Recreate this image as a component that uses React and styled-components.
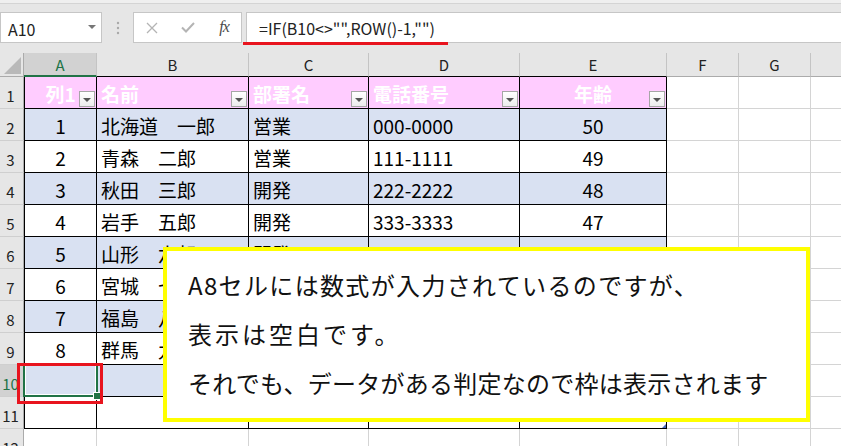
import React from "react";
import styled, { createGlobalStyle, css } from "styled-components";

const GlobalStyle = createGlobalStyle`
  html, body {
    margin: 0;
    padding: 0;
    background: #fff;
  }
  body {
    font-family: "Noto Sans CJK JP", "Noto Sans", sans-serif;
  }
`;

const GREEN = "#217346";

const headers = [
  { text: "列1", align: "center" },
  { text: "名前" },
  { text: "部署名" },
  { text: "電話番号" },
  { text: "年齢", align: "center" },
];

const ALIGN = ["center", "left", "left", "left", "center"];

const rows = [
  [1, "北海道　一郎", "営業", "000-0000", 50],
  [2, "青森　二郎", "営業", "111-1111", 49],
  [3, "秋田　三郎", "開発", "222-2222", 48],
  [4, "岩手　五郎", "開発", "333-3333", 47],
  [5, "山形　六郎", "開発", "444-4444", 46],
  [6, "宮城　七郎", "営業", "555-5555", 45],
  [7, "福島　八郎", "開発", "666-6666", 44],
  [8, "群馬　九郎", "営業", "777-7777", 43],
  ["", "", "", "", ""],
  ["", "", "", "", ""],
  ["", "", "", "", ""],
];

// H is only partly in view, its letter falls outside the window
const COLUMNS = ["A", "B", "C", "D", "E", "F", "G", ""];

const notes = [
  { text: "A8セルには数式が入力されているのですが、", spacing: 1.35 },
  { text: "表示は空白です。", spacing: 3 },
  { text: "それでも、データがある判定なので枠は表示されます", spacing: 0.25 },
];

const App = () => {
  return (
    <Window>
      <GlobalStyle />
      <FormulaBar>
        <NameBox>
          A10
          <Caret />
        </NameBox>
        <Grip>
          <svg width="4" height="14" viewBox="0 0 4 14">
            <circle cx="2" cy="2" r="1.2" fill="#a8a8a8" />
            <circle cx="2" cy="7" r="1.2" fill="#a8a8a8" />
            <circle cx="2" cy="12" r="1.2" fill="#a8a8a8" />
          </svg>
        </Grip>
        <FxBox>
          <FxButton>
            <svg width="12" height="12" viewBox="0 0 12 12">
              <path d="M1 1 L11 11 M11 1 L1 11" stroke="#b4b4b4" strokeWidth="1.3" />
            </svg>
          </FxButton>
          <FxButton>
            <svg width="14" height="11" viewBox="0 0 14 11">
              <path d="M1 5.5 L5 9.5 L13 1" stroke="#b4b4b4" strokeWidth="2" fill="none" />
            </svg>
          </FxButton>
          <FxButton>
            <FxLabel>fx</FxLabel>
          </FxButton>
        </FxBox>
        <FormulaInput>
          =IF(B10&lt;&gt;"",ROW()-1,"")
          <RedUnderline />
        </FormulaInput>
      </FormulaBar>

      <Sheet>
        <Corner>
          <svg width="24" height="24" viewBox="0 0 24 24">
            <polygon points="21,4 21,21 4,21" fill="#b9b9b9" />
          </svg>
        </Corner>
        {COLUMNS.map((c, i) => (
          <ColHeader key={i} $active={i === 0} $edge={i > 0 && i < 5}>
            {c}
          </ColHeader>
        ))}

        <RowHeader>1</RowHeader>
        {COLUMNS.map((c, i) =>
          i < 5 ? (
            <Cell key={i} $table $head $first={i === 0} $align={headers[i].align}>
              {headers[i].text}
              <FilterButton />
            </Cell>
          ) : (
            <Cell key={i} />
          )
        )}

        {rows.map((row, ri) => {
          const r = ri + 2;
          const inTable = r <= 11;
          return (
            <React.Fragment key={r}>
              <RowHeader $active={r === 10}>{r}</RowHeader>
              {COLUMNS.map((c, i) => {
                const table = inTable && i < 5;
                return (
                  <Cell
                    key={i}
                    $table={table}
                    $first={table && i === 0}
                    $band={table && r % 2 === 0}
                    $align={ALIGN[i]}
                    $resize={r === 11 && i === 4}
                  >
                    {i < 5 ? row[i] : ""}
                    {r === 10 && i === 0 && (
                      <Selection>
                        <FillHandle />
                      </Selection>
                    )}
                  </Cell>
                );
              })}
            </React.Fragment>
          );
        })}

        <RedMark />
        <Callout>
          {notes.map((n) => (
            <NoteLine key={n.text} $spacing={n.spacing}>
              {n.text}
            </NoteLine>
          ))}
        </Callout>
      </Sheet>
    </Window>
  );
};

const Window = styled.div`
  width: 841px;
  height: 446px;
  overflow: hidden;
  background: #fff;
`;

const FormulaBar = styled.div`
  height: 53px;
  box-sizing: border-box;
  background: #e6e6e6;
  border-top: 3px solid #efefef;
  box-shadow: inset 0 1px 0 #d4d4d4;
  padding-top: 9px;
  display: flex;
  align-items: flex-start;
`;

const NameBox = styled.div`
  width: 102px;
  height: 31px;
  box-sizing: border-box;
  background: #fff;
  border: 1px solid #c6c6c6;
  display: flex;
  align-items: center;
  justify-content: space-between;
  padding: 2px 5px 0 7px;
  font-size: 16px;
  color: #222;
`;

const Caret = styled.span`
  width: 0;
  height: 0;
  border-left: 4px solid transparent;
  border-right: 4px solid transparent;
  border-top: 4px solid #767676;
  margin-top: -4px;
`;

const Grip = styled.div`
  width: 31px;
  height: 31px;
  display: flex;
  align-items: center;
  justify-content: center;
`;

const FxBox = styled.div`
  width: 109px;
  height: 31px;
  box-sizing: border-box;
  background: #fff;
  border: 1px solid #c6c6c6;
  display: grid;
  grid-template-columns: repeat(3, 36px);
  align-items: center;
`;

const FxButton = styled.div`
  display: flex;
  align-items: center;
  justify-content: center;
  height: 100%;
`;

const FxLabel = styled.span`
  font-family: "Liberation Serif", "DejaVu Serif", serif;
  font-style: italic;
  font-size: 16px;
  color: #4a4a4a;
  letter-spacing: -1px;
  margin-top: -2px;
`;

const FormulaInput = styled.div`
  position: relative;
  flex: 1;
  margin-left: 4px;
  height: 31px;
  box-sizing: border-box;
  background: #fff;
  border: 1px solid #c6c6c6;
  border-right: none;
  padding-left: 12px;
  display: flex;
  align-items: center;
  font-size: 16px;
  color: #222;
  white-space: nowrap;
`;

const RedUnderline = styled.span`
  position: absolute;
  left: -4px;
  bottom: -3px;
  width: 205px;
  height: 3px;
  background: #e8141e;
`;

const Sheet = styled.div`
  position: relative;
  display: grid;
  width: max-content;
  grid-template-columns: 24px 73px 152px 120px 151px 147px 72px 72px 72px;
  grid-template-rows: 24px;
  grid-auto-rows: 32px;
`;

const Corner = styled.div`
  background: #e6e6e6;
  box-sizing: border-box;
  border-right: 1px solid #ababab;
  border-bottom: 1px solid #ababab;
  svg {
    display: block;
  }
`;

const ColHeader = styled.div`
  box-sizing: border-box;
  display: flex;
  align-items: center;
  justify-content: center;
  font-size: 15px;
  background: ${(p) => (p.$active ? "#d2d2d2" : "#e6e6e6")};
  color: ${(p) => (p.$active ? GREEN : "#222")};
  border-right: 1px solid #c4c4c4;
  border-bottom: ${(p) =>
    p.$active ? `2px solid ${GREEN}` : p.$edge ? "1px solid #000" : "1px solid #ababab"};
`;

const RowHeader = styled.div`
  box-sizing: border-box;
  display: flex;
  align-items: center;
  justify-content: center;
  padding: 6px 2px 0 0;
  font-size: 15px;
  background: ${(p) => (p.$active ? "#d2d2d2" : "#e6e6e6")};
  color: ${(p) => (p.$active ? GREEN : "#222")};
  border-right: 1px solid #ababab;
  border-bottom: 1px solid #cfcfcf;
`;

const Cell = styled.div`
  position: relative;
  box-sizing: border-box;
  display: flex;
  align-items: center;
  justify-content: ${(p) => (p.$align === "center" ? "center" : "flex-start")};
  padding: 2px 4px 0;
  font-size: 19px;
  color: #000;
  white-space: nowrap;
  background: ${(p) => (p.$head ? "#ffccff" : p.$band ? "#d9e1f2" : "#fff")};
  border-right: 1px solid ${(p) => (p.$table ? "#000" : "#d4d4d4")};
  border-bottom: 1px solid ${(p) => (p.$table ? "#000" : "#d4d4d4")};

  ${(p) =>
    p.$first &&
    css`
      border-left: 1px solid #000;
    `}

  ${(p) =>
    p.$head &&
    css`
      color: #fff;
      font-weight: 700;
    `}

  ${(p) =>
    p.$resize &&
    css`
      &::after {
        content: "";
        position: absolute;
        right: 0;
        bottom: 0;
        width: 0;
        height: 0;
        border-style: solid;
        border-width: 0 0 4px 4px;
        border-color: transparent transparent #4a6bbd transparent;
      }
    `}
`;

const FilterButton = styled.span`
  position: absolute;
  right: 1px;
  bottom: 1px;
  width: 16px;
  height: 16px;
  box-sizing: border-box;
  border: 1px solid #a6a6a6;
  background: linear-gradient(#ffffff, #ececec);

  &::after {
    content: "";
    position: absolute;
    left: 3px;
    top: 6px;
    border-left: 4px solid transparent;
    border-right: 4px solid transparent;
    border-top: 4px solid #555;
  }
`;

const Selection = styled.span`
  position: absolute;
  left: -2px;
  top: -2px;
  right: -2px;
  bottom: -1px;
  border: 2px solid ${GREEN};
  box-shadow: inset 0 0 0 1px #fff;
  z-index: 2;
`;

const FillHandle = styled.span`
  position: absolute;
  right: -5px;
  bottom: -5px;
  width: 6px;
  height: 6px;
  background: ${GREEN};
  border: 1px solid #fff;
`;

const RedMark = styled.div`
  position: absolute;
  left: 17px;
  top: 310px;
  width: 86px;
  height: 41px;
  box-sizing: border-box;
  border: 3px solid #e8141e;
  z-index: 3;
`;

const Callout = styled.div`
  position: absolute;
  left: 163px;
  top: 194px;
  width: 647px;
  height: 175px;
  box-sizing: border-box;
  border: 4px solid #ffff00;
  background: #fff;
  padding: 9px 0 0 21px;
  font-size: 24px;
  line-height: 49px;
  color: #111;
  white-space: nowrap;
  z-index: 4;
`;

const NoteLine = styled.div`
  letter-spacing: ${(p) => p.$spacing}px;
`;

export default App;
